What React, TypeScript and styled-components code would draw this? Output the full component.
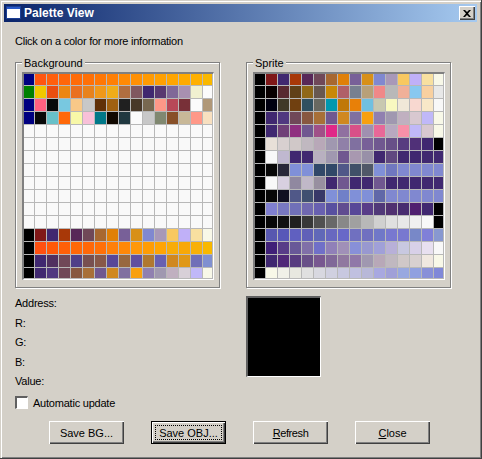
import * as React from 'react'
import styled, { createGlobalStyle } from 'styled-components'

/**
 * Palette data
 */

const WHITE_ROW = 'f9f9f9 '.repeat(16).trim()

const BACKGROUND = [
    '000080 ff5610 ff5f0c ff660a ff6b08 ff7006 ff7705 ff7f05 ff8a04 ff9004 ff9a02 ffa002 ffa500 ffaa00 ffb000 f9b800',
    '008000 f0c800 ea4e10 ec8612 ea7020 e8821c f0981a f0ac1a b06e40 805860 402870 583870 806898 a890b0 f0f0d0 fbfbfb',
    '000080 ff6080 080808 78c8e0 f8c888 c8c8c8 603008 a06010 202020 483828 786850 ff9888 b84858 783038 fbfbfb b09878',
    '000080 080808 68c0c8 ff6808 f8f8a8 f8c0d8 007888 100800 203840 fbfbfb c8c8c8 808870 885028 c8b898 ff9888 f8e0c0',
    WHITE_ROW,
    WHITE_ROW,
    WHITE_ROW,
    WHITE_ROW,
    WHITE_ROW,
    WHITE_ROW,
    WHITE_ROW,
    WHITE_ROW,
    '000000 801818 402870 a83808 582858 704858 a86830 e08008 786098 d89018 8088d0 a898b8 f8c860 c0b0f8 f8e0a0 f8f8e8',
    '000000 ff5010 ff5808 ff6008 ff6808 ff6808 ff7008 ff8008 ff8808 ff9808 ff9c04 ffa404 f8ac08 f8a808 f8b008 f8b800',
    '000000 402870 503060 704858 504088 785050 885848 584898 986840 6050a0 b07830 6860b0 d08820 e09818 7070b8 8090d0',
    '000000 402870 503880 704858 885840 a87038 705890 d08820 8070a0 f8a010 9080b0 a098b0 c0b0c0 d8d0d8 c0b8f8 f8f8e8',
]

const SPRITE = [
    '000000 801818 402870 a83808 582858 704858 a86830 e08008 786098 d89018 8088d0 a898b8 f8c860 c0b0f8 f8e0a0 f8f8e8',
    '000000 080000 582830 604018 906818 685850 c88808 b06068 788090 b8a078 f08888 b8b8b8 f0b098 88c8f0 f8d0a0 e8e8e8',
    '000000 000010 403828 704010 305060 686860 0098b0 c07808 e88008 70c0e0 c8c8b0 f8f8c0 f0e8d8 f8d8d0 f8e8c8 f8f8f8',
    '000000 402870 503880 704858 885840 a87038 705890 d08820 8070a0 f8a010 9080b0 a098b0 c0b0c0 d8c8d0 c0b8f8 f8f8e8',
    '000000 402870 704078 903080 705890 a05088 e02888 9070a0 d85088 a090b0 e86898 b8a8c0 f890a8 c0b8f8 d8c8d0 f8f8e8',
    '000000 e8e0d8 d8d0d0 d0c8c8 c0b8c0 b8a8b8 a098b0 9080a8 8070a0 786098 705890 685088 583c80 503078 402870 000000',
    '000000 f8f8f8 c0b8d0 402870 402870 b8b0c0 a098b0 705890 a898b0 9890a8 402870 604880 402870 402870 402870 402870',
    '000000 080808 282838 8090d8 8090d8 304868 304868 505888 405068 505868 8090d8 7078c0 8088d0 8088d0 8088d0 8088d0',
    '000000 f8f8f8 d8d0e0 9088a0 c0b8c8 9890a0 402870 705890 402870 402870 705890 402870 402870 402870 402870 402870',
    '000000 080808 101020 505888 405070 383868 8090d8 7080c8 8090d8 8090d8 6068a8 8088d0 8088d0 8088d0 8088d0 8088d0',
    '000000 8080d0 7878c0 7070b8 7068b0 6860b0 5850a0 604c90 584898 583c88 503878 503070 482c70 502070 402870 000000',
    '000000 080808 101010 202020 383838 505050 686868 888888 a0a0a0 b8b8b8 d0d0d0 e0e0e0 e8e8e8 f0f0f0 f8f8f8 000000',
    '000000 5858b0 5858b8 6060c0 6060b8 6068b8 6868c0 6868c8 7070c0 7070c0 7078c8 7878d0 7878d0 7888c8 8080d8 8898d0',
    '000000 402078 583c88 685898 8070a8 7070c8 9080b8 a090b8 8890d8 9898d0 a0a0d8 b8b0d8 c8c8e0 d8d0e8 e8e0f0 f8f8f8',
    '000000 402870 502878 583c80 685088 785890 806898 9078a0 9078a8 a098b0 b8a8b8 c0b8c0 d0c8c8 d8d0d0 f0e8e0 f8f8e8',
    '000000 f8f8e8 f0f0e8 e8e8e0 e0e0e0 d8d8e0 d0d0e0 c8c8e0 c0c0e0 b8b8d8 a8a8e0 a0a0d8 98a8e0 90a0e0 8890d8 8088d8',
]

const INFO_LABELS = ['Address:', 'R:', 'G:', 'B:', 'Value:']

/**
 * Component
 */

const Palette = ({ title, rows }: { title: string; rows: string[] }) => (
    <Group>
        <Legend>{title}</Legend>
        <Well>
            <Swatches>
                {rows.flatMap((row, y) =>
                    row.split(' ').map((hex, x) => <Swatch key={`${y}-${x}`} $hex={hex} />)
                )}
            </Swatches>
        </Well>
    </Group>
)

export default function App() {
    return (
        <>
            <Global />
            <Window>
                <TitleBar>
                    <svg width="16" height="14" viewBox="0 0 16 14">
                        <rect x="0" y="0" width="15" height="13" fill="#1c3f94" />
                        <rect x="1" y="1" width="13" height="2" fill="#2a5ac8" />
                        <rect x="1" y="3" width="13" height="9" fill="#ffffff" />
                    </svg>
                    <TitleText>Palette View</TitleText>
                    <CloseButton>
                        <svg width="8" height="7" viewBox="0 0 8 7">
                            <path d="M0 0h2l2 2 2-2h2L5 3.500 8 7H6L4 5 2 7H0l3-3.500z" fill="#000" />
                        </svg>
                    </CloseButton>
                </TitleBar>
                <Body>
                    <Hint>Click on a color for more information</Hint>
                    <Palettes>
                        <Palette title="Background" rows={BACKGROUND} />
                        <Palette title="Sprite" rows={SPRITE} />
                    </Palettes>
                    <InfoRow>
                        <InfoList>
                            {INFO_LABELS.map(label => (
                                <Label key={label}>{label}</Label>
                            ))}
                        </InfoList>
                        <Preview />
                    </InfoRow>
                    <CheckRow>
                        <CheckBox />
                        <Label>Automatic update</Label>
                    </CheckRow>
                    <Buttons>
                        <Button>Save BG...</Button>
                        <DefaultButton>
                            <FocusRect>Save OBJ...</FocusRect>
                        </DefaultButton>
                        <Button $tight>
                            <u>R</u>efresh
                        </Button>
                        <Button>
                            <u>C</u>lose
                        </Button>
                    </Buttons>
                </Body>
            </Window>
        </>
    )
}

/**
 * Styles
 */

const Global = createGlobalStyle`
    html, body {
        margin: 0;
        padding: 0;
        background: #d4d0c8;
    }
    body {
        font-family: "Liberation Sans", Arial, sans-serif;
        font-size: 11px;
        color: #000;
    }
`
const Window = styled.div`
    box-sizing: border-box;
    width: 482px;
    height: 459px;
    padding: 4px 4px 0 4px;
    background: #d4d0c8;
    border-right: 1px solid #404040;
    border-bottom: 1px solid #404040;
    box-shadow: inset 1px 1px 0 #d4d0c8, inset 2px 2px 0 #fff, inset -1px -1px 0 #808080;
`
const TitleBar = styled.div`
    display: flex;
    align-items: center;
    height: 18px;
    padding: 0 2px;
    background: linear-gradient(90deg, #0a246a, #a6caf0);
`
const TitleText = styled.div`
    flex: 1;
    margin-left: 2px;
    font-size: 12px;
    font-weight: bold;
    line-height: 18px;
    color: #fff;
`
const CloseButton = styled.div`
    box-sizing: border-box;
    display: flex;
    align-items: center;
    justify-content: center;
    width: 16px;
    height: 14px;
    background: #d4d0c8;
    box-shadow: inset 1px 1px 0 #fff, inset -1px -1px 0 #404040, inset -2px -2px 0 #808080;
`
const Body = styled.div`
    padding: 12px 0 0 11px;
`
const Hint = styled.div`
    height: 14px;
    line-height: 14px;
    margin-bottom: 14px;
    letter-spacing: -0.24px;
`
const Palettes = styled.div`
    display: flex;
    gap: 26px;
`
const Group = styled.div`
    position: relative;
    box-sizing: border-box;
    width: 205px;
    height: 226px;
    padding: 9px 0 0 6px;
    border: 1px solid #808080;
    box-shadow: 1px 1px 0 #fff, inset 1px 1px 0 #fff;
`
const Legend = styled.div`
    position: absolute;
    top: -7px;
    left: 6px;
    padding: 0 2px;
    line-height: 14px;
    background: #d4d0c8;
`
const Well = styled.div`
    box-sizing: border-box;
    width: 192px;
    height: 208px;
    border-style: solid;
    border-width: 2px 1px 1px 2px;
    border-color: #808080 #fff #fff #808080;
`
const Swatches = styled.div`
    display: grid;
    grid-template-columns: 10px repeat(14, 11px) 9px;
    grid-template-rows: 11px repeat(14, 12px) 10px;
    gap: 1px;
    width: 189px;
    height: 205px;
    background: #b8b8b8;
`
const Swatch = styled.div.attrs<{ $hex: string }>(props => ({
    style: { backgroundColor: `#${props.$hex}` },
}))<{ $hex: string }>``

const InfoRow = styled.div`
    display: flex;
    margin-top: 8px;
`
const InfoList = styled.div`
    display: flex;
    flex-direction: column;
    gap: 5.5px;
    width: 231px;
`
const Label = styled.div`
    height: 14px;
    line-height: 14px;
    letter-spacing: -0.22px;
`
const Preview = styled.div`
    box-sizing: border-box;
    width: 75px;
    height: 81px;
    background: #000;
    border-style: solid;
    border-width: 2px 1px 1px 2px;
    border-color: #606060 #fff #fff #606060;
`
const CheckRow = styled.div`
    display: flex;
    align-items: center;
    gap: 5px;
    height: 13px;
    margin-top: 8px;
`
const CheckBox = styled.div`
    box-sizing: border-box;
    width: 13px;
    height: 13px;
    background: #fff;
    border-style: solid;
    border-width: 2px 1px 1px 2px;
    border-color: #606060 #fff #fff #606060;
`
const Buttons = styled.div`
    display: flex;
    gap: 27px;
    margin: 12px 0 0 34px;
`
const Button = styled.div<{ $tight?: boolean }>`
    box-sizing: border-box;
    display: flex;
    align-items: center;
    justify-content: center;
    width: 75px;
    height: 23px;
    background: #d4d0c8;
    letter-spacing: ${props => (props.$tight ? '-0.4px' : '0')};
    white-space: pre;
    box-shadow: inset 1px 1px 0 #fff, inset -1px -1px 0 #404040, inset -2px -2px 0 #808080;
`
const DefaultButton = styled(Button)`
    padding: 3px;
    border: 1px solid #000;
`
const FocusRect = styled.div`
    box-sizing: border-box;
    display: flex;
    align-items: center;
    justify-content: center;
    width: 100%;
    height: 100%;
    border: 1px dotted #000;
`
